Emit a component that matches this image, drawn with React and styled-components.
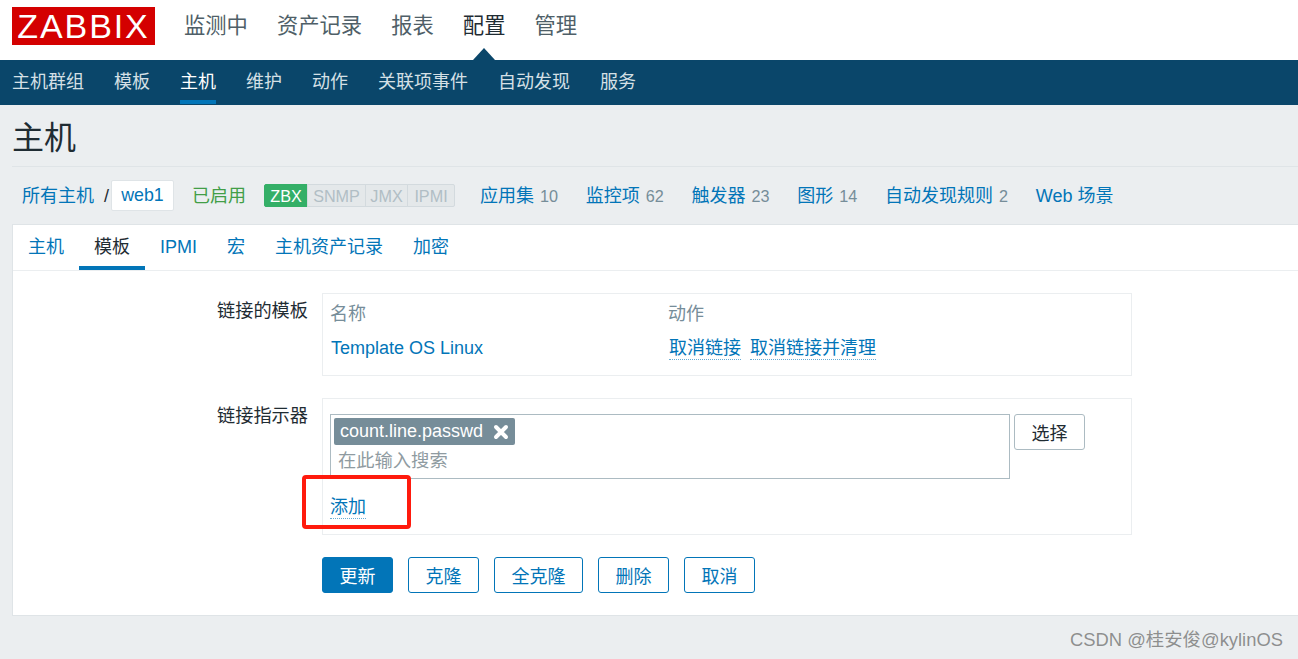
import React from 'react';
import styled, { createGlobalStyle } from 'styled-components';

const FONT = '"Liberation Sans", "Noto Sans CJK SC", Arial, sans-serif';
const LINK = '#0275b8';
const INK = '#1f2c33';
const MUTED = '#768d99';
const LINE = '#dfe4e7';
const SOFT = '#ebeef0';

const Global = createGlobalStyle`
  html, body { margin: 0; padding: 0; height: 100%; overflow: hidden; background: ${SOFT}; }
  body { font-family: ${FONT}; font-size: 18px; color: ${INK}; }
  * { box-sizing: border-box; }
`;

const Page = styled.div`
  position: relative;
  width: 1298px;
  height: 659px;
  overflow: hidden;
  background: ${SOFT};
`;

const TopBar = styled.header`
  display: flex;
  align-items: flex-start;
  height: 60px;
  padding-left: 12px;
  background: #fff;
`;

const Logo = styled.div`
  display: flex;
  align-items: center;
  justify-content: center;
  width: 143px;
  height: 38px;
  margin: 7px 29px 0 0;
  background: #d40000;
  color: #fff;
  font-size: 34px;
  letter-spacing: 1.9px;
  line-height: 38px;
`;

const TopNav = styled.nav`
  display: flex;
  gap: 29.05px;
`;

const TopItem = styled.a`
  position: relative;
  display: block;
  height: 60px;
  font-size: 21.3px;
  line-height: 52px;
  color: ${p => (p.$active ? INK : '#4f5f68')};
  ${p => p.$active && `
    &::after {
      content: '';
      position: absolute;
      left: 50%;
      bottom: 0;
      margin-left: -11px;
      border-left: 11px solid transparent;
      border-right: 11px solid transparent;
      border-bottom: 12px solid #0a466a;
    }
  `}
`;

const SubBar = styled.nav`
  display: flex;
  gap: 30px;
  height: 45px;
  padding-left: 12px;
  background: #0a466a;
`;

const SubItem = styled.a`
  display: block;
  height: 44px;
  font-size: 18px;
  line-height: 44px;
  color: ${p => (p.$active ? '#fff' : '#d5e0e6')};
  border-bottom: 4px solid ${p => (p.$active ? LINK : 'transparent')};
`;

const Main = styled.main`
  padding-left: 12px;
`;

const Title = styled.h1`
  margin: 0;
  height: 62px;
  font-size: 32px;
  font-weight: 400;
  line-height: 66px;
  color: ${INK};
  border-bottom: 1px solid ${LINE};
`;

const HostRow = styled.div`
  display: flex;
  align-items: center;
  height: 57px;
  padding: 0 0 0 10px;
`;

const HostLink = styled.a`
  color: ${LINK};
  font-size: 18px;
  line-height: 24px;
  white-space: nowrap;
`;

const Slash = styled.span`
  margin: 0 2px 0 10px;
  line-height: 24px;
  color: ${INK};
`;

const Crumb = styled.a`
  display: block;
  width: 63px;
  height: 31px;
  margin-right: 18px;
  background: #fff;
  border: 1px solid ${LINE};
  border-radius: 2px;
  color: ${LINK};
  text-align: center;
  font-size: 17.8px;
  line-height: 29px;
`;

const Enabled = styled.span`
  margin-right: 18px;
  line-height: 24px;
  color: #429e47;
`;

const Badges = styled.div`
  display: flex;
  height: 23px;
  margin-right: 25px;
`;

const Badge = styled.span`
  display: block;
  width: ${p => p.$w}px;
  height: 23px;
  text-align: center;
  font-size: 16.2px;
  line-height: 22px;
  color: ${p => (p.$on ? '#fff' : '#b1bec5')};
  background: ${p => (p.$on ? '#34af67' : '#e4e8ea')};
  border: 1px solid ${p => (p.$on ? '#34af67' : '#d3dade')};
  margin-left: ${p => (p.$on ? 0 : -1)}px;
  border-radius: ${p => p.$r};
`;

const Counted = styled.div`
  display: flex;
  align-items: center;
  margin-right: 27.75px;
`;

const Count = styled.span`
  margin-left: 6px;
  color: ${MUTED};
  font-size: 16.2px;
  line-height: 24px;
`;

const Panel = styled.section`
  height: 392px;
  margin-right: -1px;
  background: #fff;
  border: 1px solid ${LINE};
`;

const Tabs = styled.div`
  display: flex;
  height: 46px;
  border-bottom: 1px solid ${SOFT};
`;

const Tab = styled.a`
  display: block;
  height: 45px;
  padding: 0 15px;
  font-size: 18px;
  line-height: 44px;
  color: ${p => (p.$active ? INK : LINK)};
  border-bottom: 4px solid ${p => (p.$active ? LINK : 'transparent')};
`;

const Form = styled.div`
  display: flex;
  flex-direction: column;
  gap: 22px;
  padding-top: 22px;
`;

const FormRow = styled.div`
  display: grid;
  grid-template-columns: 295px 810px;
  column-gap: 14px;
`;

const Label = styled.div`
  text-align: right;
  font-size: 18.2px;
  line-height: 24px;
  padding-top: ${p => p.$top}px;
  color: ${INK};
`;

const Box = styled.div`
  border: 1px solid ${SOFT};
`;

const LinkedGrid = styled(Box)`
  display: grid;
  grid-template-columns: 338px 1fr;
  grid-auto-rows: 35px;
  align-items: center;
  height: 83px;
  padding: 2px 8px 0;
`;

const Head = styled.div`
  margin: -4px 0 0 -1px;
  color: ${MUTED};
  font-size: 18px;
`;

const PlainLink = styled.a`
  color: ${LINK};
  font-size: 18px;
`;

const Actions = styled.div`
  display: flex;
  gap: 9px;
`;

const DotLink = styled.a`
  display: inline-block;
  color: ${LINK};
  font-size: 18px;
  line-height: 21px;
  border-bottom: 1px dotted rgba(2, 117, 184, 0.6);
`;

const IndicatorBox = styled(Box)`
  height: 137px;
  padding: 15px 7px 0;
`;

const PickerRow = styled.div`
  display: flex;
  align-items: flex-start;
  gap: 4px;
`;

const Picker = styled.div`
  width: 680px;
  height: 65px;
  padding: 3px;
  border: 1px solid #acbbc2;
`;

const Tag = styled.div`
  display: inline-flex;
  align-items: center;
  gap: 10px;
  height: 27px;
  padding: 0 6px 0 6px;
  border-radius: 2px;
  background: ${MUTED};
  color: #fff;
  font-size: 18px;
  line-height: 27px;
`;

const Placeholder = styled.div`
  padding-left: 4px;
  color: #8f9ba1;
  font-size: 18.3px;
  line-height: 32px;
`;

const SelectButton = styled.button`
  width: 71px;
  height: 36px;
  padding: 0;
  background: #fff;
  border: 1px solid #acbbc2;
  border-radius: 3px;
  font-family: ${FONT};
  font-size: 18px;
  color: ${INK};
`;

const AddWrap = styled.div`
  margin: 18px 0 0;
  line-height: 0;
`;

const ButtonRow = styled.div`
  display: flex;
  gap: 15px;
  grid-column: 2;
`;

const Btn = styled.button`
  height: 36px;
  padding: 0 16.5px;
  border: 1px solid ${LINK};
  border-radius: 3px;
  background: ${p => (p.$primary ? LINK : '#fff')};
  color: ${p => (p.$primary ? '#fff' : LINK)};
  font-family: ${FONT};
  font-size: 18px;
`;

const Callout = styled.div`
  position: absolute;
  left: 302px;
  top: 475px;
  width: 109px;
  height: 54px;
  border: 4px solid #ff1a0d;
  border-radius: 4px;
  pointer-events: none;
`;

const Watermark = styled.div`
  position: absolute;
  right: 15px;
  top: 628px;
  font-size: 18.4px;
  line-height: 24px;
  color: rgba(110, 110, 110, 0.75);
  white-space: nowrap;
`;

const CloseIcon = () => (
  <svg width="16" height="16" viewBox="0 0 16 16" aria-hidden="true">
    <path d="M3 3 L13 13 M13 3 L3 13" stroke="#fff" strokeWidth="4" strokeLinecap="round" fill="none" />
  </svg>
);

const topItems = ['监测中', '资产记录', '报表', '配置', '管理'];
const subItems = ['主机群组', '模板', '主机', '维护', '动作', '关联项事件', '自动发现', '服务'];
const tabs = ['主机', '模板', 'IPMI', '宏', '主机资产记录', '加密'];
const counted = [['应用集', 10], ['监控项', 62], ['触发器', 23], ['图形', 14], ['自动发现规则', 2]];
const badges = [
  ['ZBX', 44, true, '2px 0 0 2px'],
  ['SNMP', 59, false, '0'],
  ['JMX', 43, false, '0'],
  ['IPMI', 48, false, '0 2px 2px 0'],
];
const buttons = ['克隆', '全克隆', '删除', '取消'];

export default function App() {
  return (
    <Page>
      <Global />
      <TopBar>
        <Logo>ZABBIX</Logo>
        <TopNav>
          {topItems.map(t => <TopItem key={t} $active={t === '配置'}>{t}</TopItem>)}
        </TopNav>
      </TopBar>
      <SubBar>
        {subItems.map(t => <SubItem key={t} $active={t === '主机'}>{t}</SubItem>)}
      </SubBar>
      <Main>
        <Title>主机</Title>
        <HostRow>
          <HostLink>所有主机</HostLink>
          <Slash>/</Slash>
          <Crumb>web1</Crumb>
          <Enabled>已启用</Enabled>
          <Badges>
            {badges.map(([t, w, on, r]) => <Badge key={t} $w={w} $on={on} $r={r}>{t}</Badge>)}
          </Badges>
          {counted.map(([t, n]) => (
            <Counted key={t}>
              <HostLink>{t}</HostLink>
              <Count>{n}</Count>
            </Counted>
          ))}
          <HostLink>Web 场景</HostLink>
        </HostRow>
        <Panel>
          <Tabs>
            {tabs.map(t => <Tab key={t} $active={t === '模板'}>{t}</Tab>)}
          </Tabs>
          <Form>
            <FormRow>
              <Label $top={6}>链接的模板</Label>
              <LinkedGrid>
                <Head>名称</Head>
                <Head>动作</Head>
                <PlainLink>Template OS Linux</PlainLink>
                <Actions>
                  <DotLink>取消链接</DotLink>
                  <DotLink>取消链接并清理</DotLink>
                </Actions>
              </LinkedGrid>
            </FormRow>
            <FormRow>
              <Label $top={6}>链接指示器</Label>
              <IndicatorBox>
                <PickerRow>
                  <Picker>
                    <Tag>count.line.passwd<CloseIcon /></Tag>
                    <Placeholder>在此输入搜索</Placeholder>
                  </Picker>
                  <SelectButton>选择</SelectButton>
                </PickerRow>
                <AddWrap><DotLink>添加</DotLink></AddWrap>
              </IndicatorBox>
            </FormRow>
            <FormRow>
              <ButtonRow>
                <Btn $primary>更新</Btn>
                {buttons.map(t => <Btn key={t}>{t}</Btn>)}
              </ButtonRow>
            </FormRow>
          </Form>
        </Panel>
      </Main>
      <Callout />
      <Watermark>CSDN @桂安俊@kylinOS</Watermark>
    </Page>
  );
}
